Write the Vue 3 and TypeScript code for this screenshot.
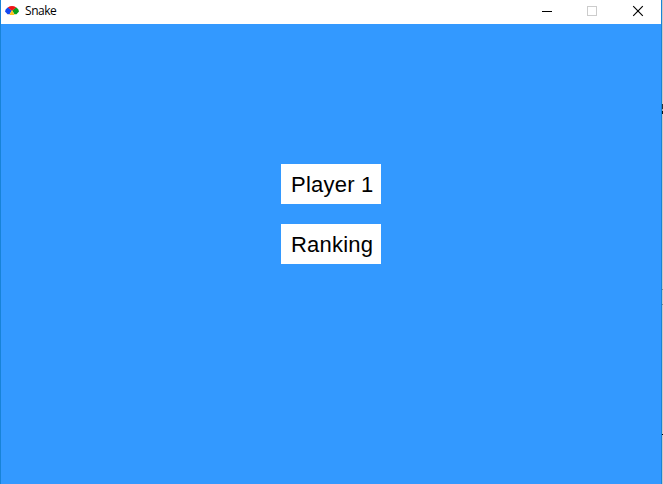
<script setup lang="ts">
const title: string = 'Snake'
const items: string[] = ['Player 1', 'Ranking']
</script>

<template>
  <div class="desktop">
    <div class="window">
      <header class="titlebar">
        <svg class="logo" width="16" height="16" viewBox="0 0 16 16">
          <path d="M8 7.5 L4 4.2 Q1 6 1 8.5 L3.5 11.3 L5.5 11.3 Z" fill="#1449f0" />
          <path d="M8 7.5 L12 4.2 Q15 6 15 8.5 L12.5 11.3 L10.5 11.3 Z" fill="#08a01c" />
          <path d="M8 7.8 L3.8 4.4 Q8 1.6 12.2 4.4 Z" fill="#f01414" />
          <path d="M8 7 L10.6 12 L5.4 12 Z" fill="#ffc21a" />
        </svg>
        <span class="title">{{ title }}</span>
        <div class="controls">
          <svg class="control" width="46" height="24" shape-rendering="crispEdges">
            <rect x="18" y="11" width="10" height="1" fill="#000" />
          </svg>
          <svg class="control" width="45" height="24" shape-rendering="crispEdges">
            <rect x="17.5" y="6.5" width="9" height="9" fill="none" stroke="#ccc" />
          </svg>
          <svg class="control" width="46" height="24">
            <path d="M18.2 6.2 L27.8 15.8 M27.8 6.2 L18.2 15.8" stroke="#000" stroke-width="1.15" />
          </svg>
        </div>
      </header>
      <main class="menu">
        <button v-for="item in items" :key="item" class="item">{{ item }}</button>
      </main>
    </div>
    <div class="edge">
      <i class="speck tall"></i>
      <i class="speck soft"></i>
      <i class="speck soft second"></i>
      <i class="speck low"></i>
    </div>
  </div>
</template>

<style>
body {
  margin: 0;
  overflow: hidden;
}
</style>

<style scoped>
.desktop {
  display: flex;
  width: 663px;
  height: 484px;
}
.window {
  box-sizing: border-box;
  display: flex;
  flex-direction: column;
  width: 662px;
  border-left: 1px solid #1883d7;
  border-right: 1px solid #1883d7;
  background: #3399ff;
}
.titlebar {
  display: flex;
  height: 24px;
  background: #fff;
}
.logo {
  margin: 3px 0 0 3px;
}
.title {
  margin-left: 5px;
  font: 12px/22px "Open Sans", "Noto Sans", sans-serif;
  letter-spacing: -0.45px;
  color: #000;
}
.controls {
  display: flex;
  margin-left: auto;
}
.control {
  display: block;
}
.menu {
  display: flex;
  flex-direction: column;
  align-items: center;
  gap: 20px;
  padding-top: 140px;
}
.item {
  box-sizing: border-box;
  width: 100px;
  height: 40px;
  padding: 1px 0 0 10px;
  border: 0;
  background: #fff;
  color: #000;
  font: 22px/39px "Liberation Sans", Arial, sans-serif;
  letter-spacing: 0.22px;
  text-align: left;
  white-space: nowrap;
}
.edge {
  width: 1px;
  background: #c8c8c8;
}
.speck {
  display: block;
  width: 1px;
  height: 1px;
  background: #000;
}
.tall {
  height: 10px;
  margin-top: 104px;
  background: linear-gradient(#333 0 5px, #aaa 5px 7px, #111 7px);
}
.soft {
  margin-top: 175px;
  background: #888;
}
.second {
  margin-top: 14px;
}
.low {
  margin-top: 129px;
}
</style>
